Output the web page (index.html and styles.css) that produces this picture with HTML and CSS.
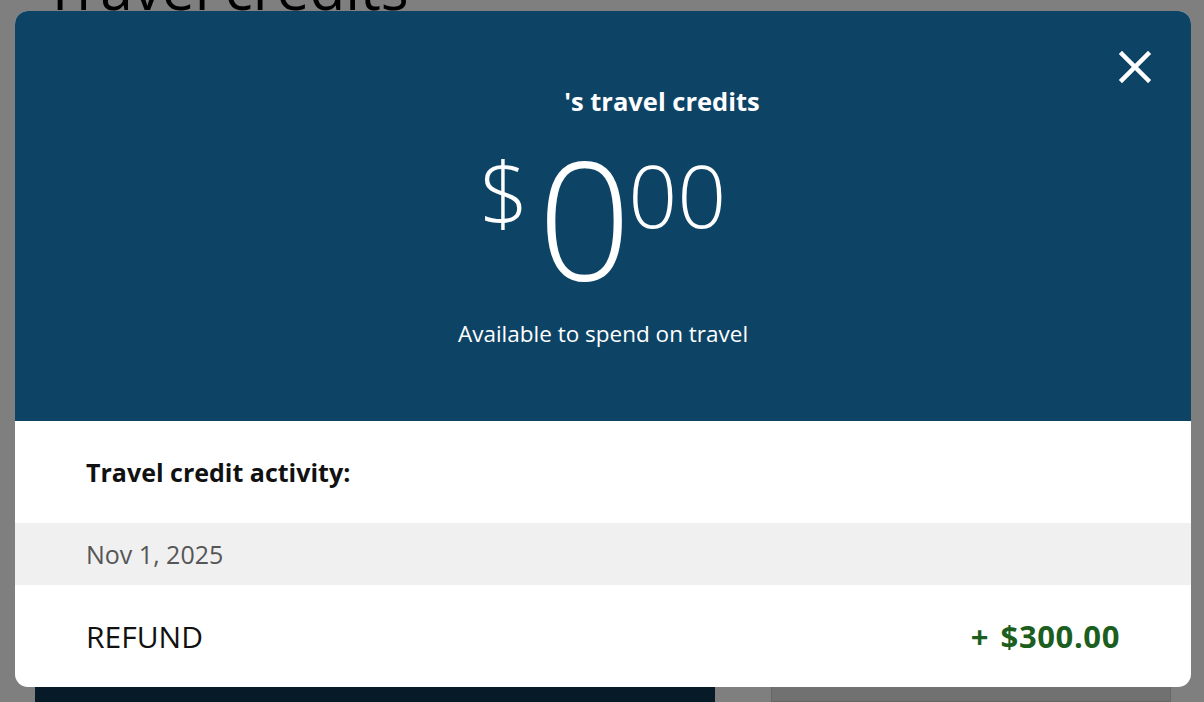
FILE: index.html
```html
<!DOCTYPE html>
<html lang="en">
<head>
<meta charset="utf-8">
<title>Travel credits</title>
<link rel="stylesheet" href="styles.css">
</head>
<body>
<div class="page">
  <h1 class="page-title">Travel credits</h1>
  <div class="page-cards">
    <div class="card-dark"></div>
    <div class="card-light"></div>
  </div>
</div>
<div class="overlay"></div>
<div class="modal" role="dialog" aria-label="Travel credits">
  <button class="close" aria-label="Close">
    <svg width="34" height="34" viewBox="0 0 34 34"><path d="M4 4 L30 30 M30 4 L4 30" stroke="#fff" stroke-width="4.5" stroke-linecap="square" fill="none"/></svg>
  </button>
  <div class="modal-head">
    <div class="modal-title"><span class="name-slot"></span>'s travel credits</div>
    <div class="amount">
      <span class="amt-cur">$</span><span class="amt-int">0</span><span class="amt-dec">00</span>
    </div>
    <div class="amount-caption">Available to spend on travel</div>
  </div>
  <div class="activity-head">Travel credit activity:</div>
  <div class="activity-date">Nov 1, 2025</div>
  <div class="activity-row">
    <span class="activity-type">REFUND</span>
    <span class="activity-amt">+ $300.00</span>
  </div>
</div>
</body>
</html>
```
FILE: styles.css
```css
* { box-sizing: border-box; }
html, body { margin: 0; padding: 0; }
body {
  width: 1204px;
  height: 702px;
  overflow: hidden;
  background: #ffffff;
  font-family: "Open Sans", "Noto Sans", Arial, sans-serif;
  position: relative;
}
.page { padding: 0 33px 0 35px; }
.page-title {
  margin: -42px 0 0 9px;
  font-size: 58.5px;
  line-height: 59px;
  font-weight: 400;
  color: #000;
}
.page-cards {
  margin-top: 610px;
  display: flex;
  gap: 56px;
}
.card-dark { width: 680px; height: 75px; background: #0e3450; }
.card-light { width: 400px; height: 75px; background: #e3e3e3; border: 1px solid #cfcfcf; }
.overlay {
  position: absolute;
  inset: 0;
  background: rgba(0, 0, 0, 0.5);
}
.modal {
  position: absolute;
  left: 15px;
  top: 11px;
  width: 1176px;
  height: 676px;
  background: #fff;
  border-radius: 13px;
  overflow: hidden;
}
.close {
  position: absolute;
  top: 39px;
  right: 39px;
  width: 34px;
  height: 34px;
  padding: 0;
  border: 0;
  background: transparent;
  display: flex;
}
.modal-head {
  height: 410px;
  background: #0d4466;
  color: #fff;
  display: flex;
  flex-direction: column;
  align-items: center;
  padding-top: 74px;
}
.modal-title {
  font-size: 25.5px;
  line-height: 32px;
  font-weight: 700;
  display: flex;
}
.name-slot { display: inline-block; width: 118px; }
.amount {
  margin-top: 18px;
  display: flex;
  align-items: flex-start;
  height: 164px;
  font-weight: 300;
}
.amt-cur { font-size: 86px; line-height: 1; margin-top: 14px; margin-right: 9px; }
.amt-int { font-size: 164px; line-height: 1; }
.amt-dec { font-size: 86px; line-height: 1; margin-top: 17px; margin-left: -3px; }
.amount-caption {
  margin-top: 21px;
  font-size: 22.5px;
  line-height: 28px;
}
.activity-head {
  height: 102px;
  display: flex;
  align-items: center;
  padding-left: 71px;
  font-size: 25px;
  font-weight: 700;
  color: #111;
}
.activity-date {
  height: 62px;
  display: flex;
  align-items: center;
  padding-left: 71px;
  background: #f0f0f0;
  font-size: 25px;
  color: #565656;
}
.activity-row {
  height: 102px;
  display: flex;
  align-items: center;
  justify-content: space-between;
  padding: 0 71px;
  font-size: 30px;
}
.activity-type { color: #111; }
.activity-amt { color: #1b5e20; font-weight: 700; font-size: 31px; letter-spacing: 0.6px; word-spacing: 3px; }
```
